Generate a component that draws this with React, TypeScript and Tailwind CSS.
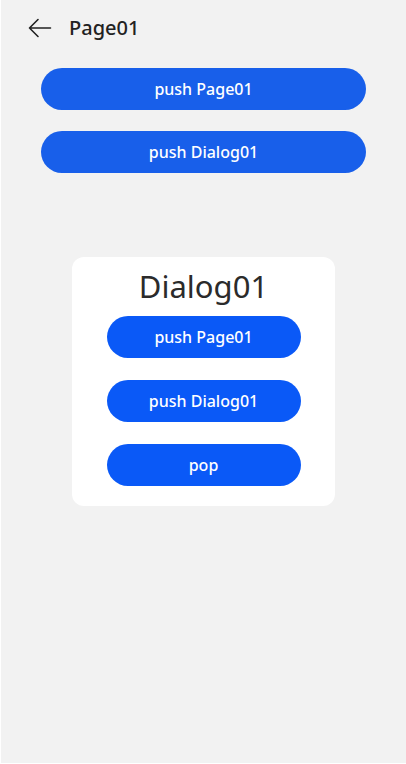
const font = { fontFamily: '"Noto Sans", Roboto, sans-serif' };

function PillButton({ label, className }: { label: string; className: string }) {
  return (
    <button
      className={`h-[42px] rounded-full text-white text-[16px] font-medium flex items-center justify-center ${className}`}
    >
      {label}
    </button>
  );
}

export default function App() {
  return (
    <div
      className="relative w-[406px] h-[764px] bg-[#f2f2f2] border-l border-b border-white overflow-hidden"
      style={font}
    >
      {/* Title bar */}
      <div className="h-[56px] flex items-center pl-[27px]">
        <svg width="24" height="20" viewBox="0 0 24 20" fill="none" className="shrink-0">
          <path
            d="M22.5 10H1.5M10 1.5L1.5 10L10 18.5"
            stroke="#222"
            strokeWidth="1.6"
            strokeLinecap="round"
            strokeLinejoin="round"
          />
        </svg>
        <span className="ml-[17px] text-[20px] text-[#222] font-medium leading-none">Page01</span>
      </div>

      {/* Page content */}
      <div className="flex flex-col items-center gap-[21px] pt-[12px]">
        <PillButton label="push Page01" className="w-[325px] bg-[#185fea]" />
        <PillButton label="push Dialog01" className="w-[325px] bg-[#185fea]" />
      </div>

      {/* Dialog */}
      <div className="absolute inset-0 flex items-center justify-center">
        <div className="w-[263px] h-[249px] bg-white rounded-[12px] flex flex-col items-center pt-[9px]">
          <div className="text-[31px] leading-[40px] text-[#2b2b2b]">Dialog01</div>
          <div className="flex flex-col gap-[22px] mt-[10px]">
            <PillButton label="push Page01" className="w-[194px] bg-[#0a59f7]" />
            <PillButton label="push Dialog01" className="w-[194px] bg-[#0a59f7]" />
            <PillButton label="pop" className="w-[194px] bg-[#0a59f7]" />
          </div>
        </div>
      </div>
    </div>
  );
}
